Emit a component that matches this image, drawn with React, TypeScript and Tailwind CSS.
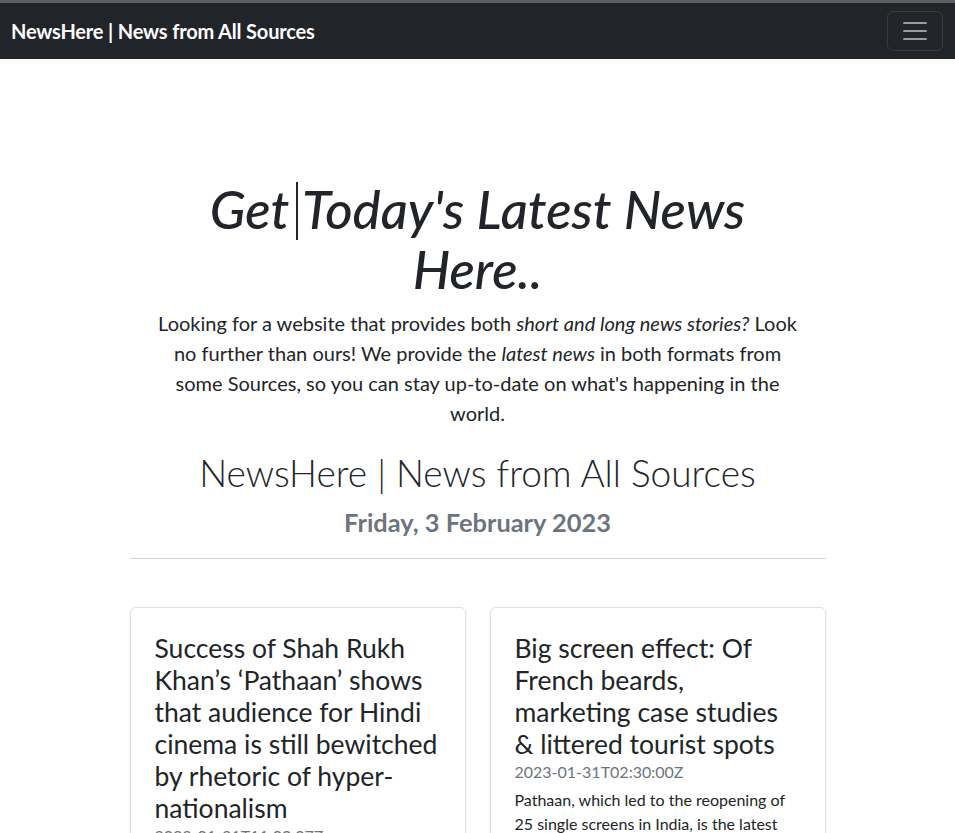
import React from "react";

export default function App() {
  return (
    <div className="min-h-[833px] bg-white text-[#212529]" style={{ fontFamily: "Lato, 'Noto Sans', sans-serif" }}>
      <div className="h-[3px] bg-[#5e5e5e]" />
      <nav className="bg-[#212529] h-[56px] flex items-center justify-between pl-[11px] pr-3">
        <span className="text-white font-bold text-[20px] tracking-[-0.17px]">NewsHere | News from All Sources</span>
        <button className="w-[56px] h-[40px] border border-white/10 rounded-[6px] flex items-center justify-center">
          <svg width="30" height="30" viewBox="0 0 30 30">
            <path d="M4 7h22M4 15h22M4 23h22" stroke="rgba(255,255,255,0.55)" strokeWidth="2" strokeLinecap="round" />
          </svg>
        </button>
      </nav>

      <section className="flex flex-col items-center text-center pt-[121px]">
        <h1 className="italic font-medium text-[52.8px] leading-[57px] max-w-[600px] mb-[11px]">
          Get<span className="inline-block w-[1.5px] h-[58px] bg-[#212529] ml-[7px] mr-[4px] align-[-11px]" />Today's Latest News Here..
        </h1>
        <p className="text-[20px] leading-[30px] font-normal max-w-[650px]">
          Looking for a website that provides both <em>short and long news stories?</em> Look no further than ours! We provide the <em>latest news</em> in both formats from some Sources, so you can stay up-to-date on what's happening in the world.
        </p>
      </section>

      <div className="w-[696px] mx-auto">
        <h2 className="text-center text-[37px] leading-[1.2] font-light mt-[23px]">NewsHere | News from All Sources</h2>
        <h3 className="text-center text-[25.4px] leading-[1.2] font-bold text-[#6c757d] mt-[12px]">Friday, 3 February 2023</h3>
        <hr className="mt-[20px] border-t border-[#d3d4d5]" />

        <div className="grid grid-cols-2 gap-6 mt-[48px] items-start">
          <div className="border border-black/[0.12] rounded-[6px] shadow-sm p-6">
            <h4 className="text-[26.5px] leading-[32px]">Success of Shah Rukh Khan’s ‘Pathaan’ shows that audience for Hindi cinema is still bewitched by rhetoric of hyper-nationalism</h4>
            <div className="text-[#6c757d] text-[16px] leading-[24px]">2023-01-31T11:00:07Z</div>
            <p className="text-[16px] leading-[24px] mt-[4px]">Shah Rukh Khan’s film has broken box office records around the country and abroad, bringing audiences back to the theatres.</p>
          </div>
          <div className="border border-black/[0.12] rounded-[6px] shadow-sm p-6">
            <h4 className="text-[26.5px] leading-[32px]">Big screen effect: Of French beards, marketing case studies &amp; littered tourist spots</h4>
            <div className="text-[#6c757d] text-[16px] leading-[24px]">2023-01-31T02:30:00Z</div>
            <p className="text-[16px] leading-[24px] mt-[4px]">Pathaan, which led to the reopening of 25 single screens in India, is the latest example of how movies influence our lives.</p>
          </div>
        </div>
      </div>
    </div>
  );
}
